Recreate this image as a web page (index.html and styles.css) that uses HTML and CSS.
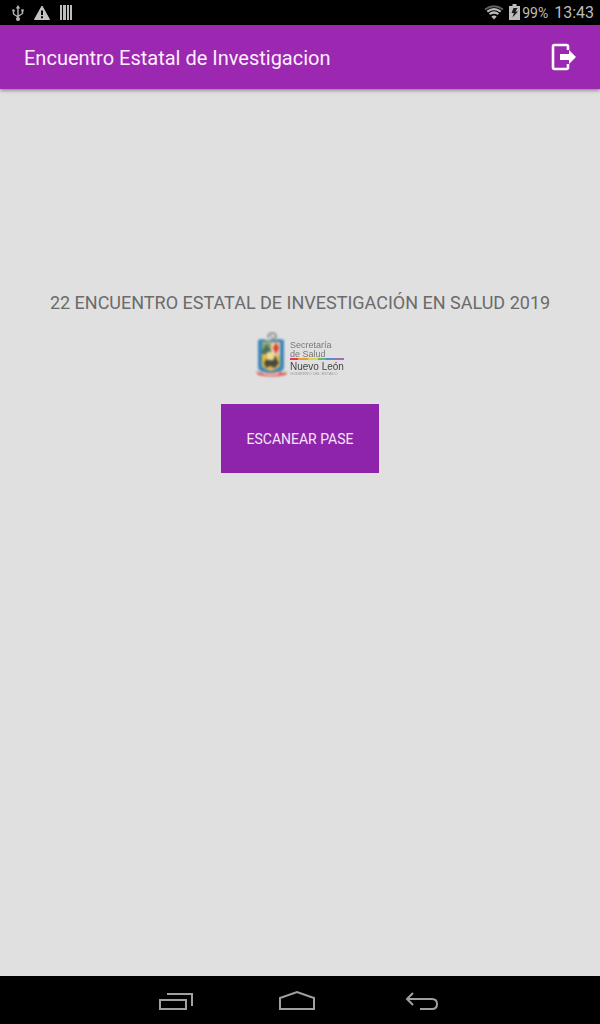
FILE: index.html
```html
<!DOCTYPE html>
<html lang="es">
<head>
<meta charset="utf-8">
<meta name="viewport" content="width=device-width, initial-scale=1">
<title>Encuentro Estatal de Investigacion</title>
<link rel="stylesheet" href="styles.css">
</head>
<body>
<div class="screen">
  <div class="status">
    <div class="status-group notices">
      <svg width="16" height="20" viewBox="0 0 16 20" fill="none" stroke="#b4b4b4" stroke-width="1.4" aria-label="USB">
        <path d="M8 4v12M3.500 8v3l4.500 3M12.500 8v2.500l-4.500 3"/>
        <path d="M8 2l2.300 3.500h-4.600zM11.300 6.200h2.400v2.400h-2.400z" fill="#b4b4b4" stroke="none"/>
        <circle cx="3.500" cy="7.500" r="1.300" fill="#b4b4b4" stroke="none"/>
        <circle cx="8" cy="16" r="2" fill="#b4b4b4" stroke="none"/>
      </svg>
      <svg width="18" height="20" viewBox="0 0 18 20" aria-label="Aviso">
        <path d="M9 3l7.500 13.500H1.500z" fill="#c4c4c4" stroke="#c4c4c4" stroke-linejoin="round"/>
        <path d="M8 7.500h2V12H8zM8 13.200h2v2H8z" fill="#000"/>
      </svg>
      <svg width="16" height="20" viewBox="0 0 16 20" fill="#bdbdbd" aria-label="Notificación">
        <path d="M2 2h2v15H2zM5 2h3v15H5zM9 2h2v15H9zM12 2h2v15h-2z"/>
      </svg>
    </div>
    <div class="status-group">
      <svg width="20" height="16" viewBox="0 0 20 16" fill="none" aria-label="Wi-Fi">
        <path d="M1 4.500Q10-2 19 4.500" stroke="#606060" stroke-width="2"/>
        <path d="M3.300 6.600Q10 1.600 16.700 6.600M5.600 9.200Q10 5.800 14.400 9.200" stroke="#bdbdbd" stroke-width="2.200"/>
        <path d="M7.300 11.400Q10 9.400 12.700 11.400L10 14.400z" fill="#bdbdbd"/>
      </svg>
      <svg class="battery" width="11" height="18" viewBox="0 0 11 18" aria-label="Batería">
        <path d="M3.500 0h4v2H11v14H0V2h3.500z" fill="#bdbdbd"/>
        <path d="M4.500 4h4L6.500 7.500H9L3.500 13.500l1.300-4.500H2.500z" fill="#1c1c1c"/>
      </svg>
      <span class="percent">99%</span>
      <span class="clock">13:43</span>
    </div>
  </div>
  <header class="toolbar">
    <h1 class="title">Encuentro Estatal de Investigacion</h1>
    <button class="exit" type="button" aria-label="Salir">
      <svg width="26" height="28" viewBox="0 0 26 28">
        <path d="M18 7V3.500Q18 2 16.500 2H4.500Q3 2 3 3.500v21Q3 26 4.500 26h12Q18 26 18 24.500V21" fill="none" stroke="#fff" stroke-width="2.600"/>
        <path d="M10 11h9V7l7 7-7 7v-4h-9z" fill="#fff"/>
      </svg>
    </button>
  </header>
  <main class="content">
    <p class="event">22 ENCUENTRO ESTATAL DE INVESTIGACIÓN EN SALUD 2019</p>
    <svg class="logo" width="92" height="48" viewBox="0 0 92 48" role="img" aria-label="Secretaría de Salud Nuevo León">
      <g class="crest">
        <path d="M14 7q0-5 4-5t4 3-4 3l-1 3" fill="none" stroke="#888" stroke-width="1.700"/>
        <path d="M16 5h3M15 9h6" stroke="#999" stroke-width="1.300"/>
        <path d="M4 9l4-1 8 2 9-2 5 1v27q0 4-5 5l-8 3-8-3q-5-1-5-5z" fill="#3c88b9"/>
        <path d="M8 11h18v24q-4 4-9 5-6-1-9-5z" fill="#d9b967"/>
        <path d="M8 12h9v11H8z" fill="#84a66e"/>
        <path d="M8 20l5-7 4 7v3H8z" fill="#526c5b"/>
        <path d="M17 12h9v12h-9z" fill="#e7cfb0"/>
        <path d="M22 12q4 4 2 7l-2 4-3-6z" fill="#e13c2c"/>
        <path d="M8 24h8v13q-6-1-8-5z" fill="#efb735"/>
        <path d="M10 32l4-7 3 5 4-5 4 7-4 5-5-2-4 2z" fill="#4d4939"/>
        <path d="M13 21h7v8h-7z" fill="#eadc9c"/>
        <path d="M2 40q4 3 9 1 6 2 13-1 4 3 9 1l-1 3q-14 3-28 0z" fill="#d86559"/>
        <path d="M9 41q7 3 16 0v2q-8 2-16 0z" fill="#e9dede"/>
      </g>
      <g class="wordmark">
        <text x="36" y="17">Secretaría</text>
        <text x="36" y="26">de Salud</text>
        <text class="state" x="36" y="39">Nuevo León</text>
        <text class="tagline" x="36" y="44">GOBIERNO DEL ESTADO</text>
      </g>
      <g class="stripe">
        <path d="M36 27h8v2h-8z" fill="#e23a55"/>
        <path d="M44 27h10v2H44z" fill="#ee9a38"/>
        <path d="M54 27h10v2H54z" fill="#e1d34b"/>
        <path d="M64 27h8v2h-8z" fill="#62b879"/>
        <path d="M72 27h8v2h-8z" fill="#4e91cb"/>
        <path d="M80 27h10v2H80z" fill="#a16bb8"/>
      </g>
    </svg>
    <button class="scan" type="button">ESCANEAR PASE</button>
  </main>
  <nav class="navbar" aria-label="Sistema">
    <button class="nav-button" type="button" aria-label="Recientes">
      <svg width="48" height="48" viewBox="0 0 48 48"><path d="M6 24h26v9H6zM13 18h25v12"/></svg>
    </button>
    <button class="nav-button" type="button" aria-label="Inicio">
      <svg width="48" height="48" viewBox="0 0 48 48"><path d="M4 33V22l17-6 17 6v11z"/></svg>
    </button>
    <button class="nav-button" type="button" aria-label="Atrás">
      <svg width="48" height="48" viewBox="0 0 48 48"><path d="M15 17l-6 6 6 6M9 23h25q5 0 5 5t-5 5H22"/></svg>
    </button>
  </nav>
</div>
</body>
</html>
```
FILE: styles.css
```css
* { box-sizing: border-box; }
body {
  margin: 0;
  font-family: Roboto, "Liberation Sans", sans-serif;
  background: #e0e0e0;
}
button {
  margin: 0;
  padding: 0;
  border: 0;
  background: none;
  font: inherit;
}
svg { display: block; flex: none; }
.screen {
  display: flex;
  flex-direction: column;
  min-height: 100vh;
}
.status {
  display: flex;
  justify-content: space-between;
  align-items: center;
  height: 25px;
  padding: 0 6px 0 10px;
  background: #000;
  color: #bdbdbd;
}
.status-group { display: flex; align-items: center; }
.notices { gap: 7px; }
.battery { margin-left: 5px; }
.percent { margin-left: 2px; font-size: 14px; }
.clock { margin-left: 6px; font-size: 16px; }
.toolbar {
  display: flex;
  justify-content: space-between;
  align-items: center;
  height: 64px;
  padding: 0 24px;
  background: #9c27b0;
  box-shadow: 0 1px 4px rgba(0, 0, 0, 0.5);
}
.title {
  margin: 0;
  padding-top: 2px;
  color: #fbeffd;
  font-size: 20px;
  font-weight: 400;
}
.content {
  flex: 1;
  display: flex;
  flex-direction: column;
  align-items: center;
  padding-top: 202px;
}
.event {
  margin: 0;
  color: #6b6b6b;
  font-size: 18px;
  line-height: 24px;
  text-align: center;
}
.logo { margin-top: 16px; }
.crest { filter: blur(0.8px); }
.stripe { filter: blur(0.4px); }
.wordmark {
  filter: blur(0.6px);
  fill: #777;
  font-family: "Liberation Sans", sans-serif;
  font-size: 9px;
}
.state { fill: #444; font-size: 10px; }
.tagline { fill: #999; font-size: 4px; }
.scan {
  margin-top: 25px;
  padding: 25px 26px 23px;
  background: #8e24aa;
  color: #f6e5fa;
  font-size: 14px;
  line-height: 21px;
}
.navbar {
  display: flex;
  justify-content: center;
  height: 48px;
  background: #000;
}
.nav-button {
  display: flex;
  justify-content: center;
  width: 122px;
}
.nav-button path {
  fill: none;
  stroke: #a0a0a0;
  stroke-width: 2;
}
```
